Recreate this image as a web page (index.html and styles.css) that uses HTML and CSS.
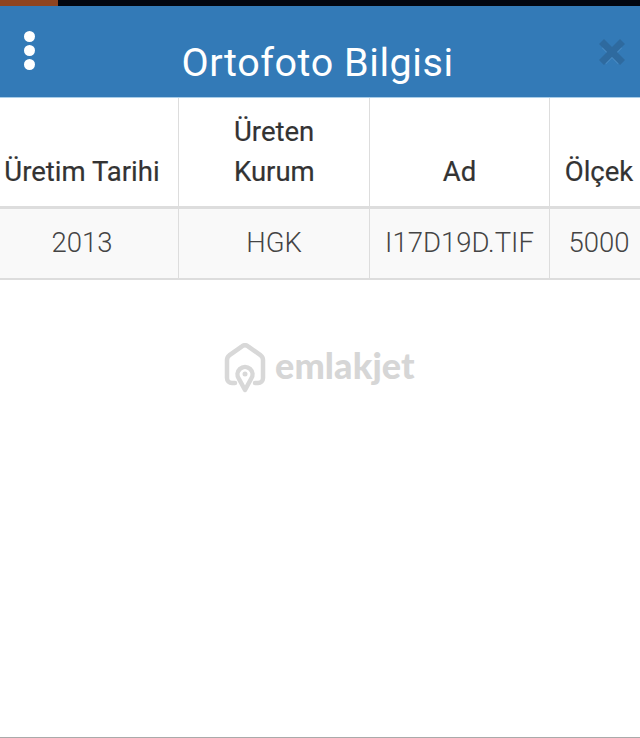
FILE: index.html
```html
<!DOCTYPE html>
<html lang="tr">
<head>
<meta charset="utf-8">
<title>Ortofoto Bilgisi</title>
<link rel="stylesheet" href="styles.css">
</head>
<body>
<div class="page">
  <div class="status"><div class="status-accent"></div></div>
  <header class="header">
    <div class="menu"><span class="dot"></span><span class="dot"></span><span class="dot"></span></div>
    <h1 class="title">Ortofoto Bilgisi</h1>
    <svg class="close" width="30" height="30" viewBox="0 0 30 30" aria-hidden="true">
      <path class="close-glow" d="M5 9 9 5l6 6 6-6 4 4-6 6 6 6-4 4-6-6-6 6-4-4 6-6z"/>
      <path class="close-x" d="M2 7 7 2l8 8 8-8 5 5-8 8 8 8-5 5-8-8-8 8-5-5 8-8z"/>
    </svg>
  </header>
  <div class="table">
    <div class="cell head c1">Üretim Tarihi</div>
    <div class="cell head c2">Üreten<br>Kurum</div>
    <div class="cell head c3">Ad</div>
    <div class="cell head c4">Ölçek</div>
    <div class="cell data c1">2013</div>
    <div class="cell data c2">HGK</div>
    <div class="cell data c3">I17D19D.TIF</div>
    <div class="cell data c4">5000</div>
  </div>
  <div class="watermark">
    <svg class="wm-icon" width="42" height="52" viewBox="0 0 42 52" aria-hidden="true">
      <path class="wm-stroke" d="M11 40H8a5 5 0 0 1-5-5V17c0-2 .8-3.500 2.200-4.600L18 3.300a5 5 0 0 1 6 0l12.800 9.100C38.200 13.500 39 15 39 17v18a5 5 0 0 1-5 5h-3"/>
      <path class="wm-stroke" d="M21 47l-6-11a7.500 7.500 0 1 1 12 0z"/>
      <circle class="wm-hole" cx="21" cy="31" r="2.500"/>
    </svg>
    <span class="wm-text">emlakjet</span>
  </div>
  <div class="spacer"></div>
  <div class="bottom-line"></div>
</div>
</body>
</html>
```

FILE: styles.css
```css
* { box-sizing: border-box; }
html, body { margin: 0; padding: 0; background: #fff; }
body { font-family: Roboto, "Liberation Sans", sans-serif; }
.page { width: 640px; height: 738px; overflow: hidden; display: flex; flex-direction: column; background: #fff; }
.status { height: 6px; background: #02060f; flex: none; }
.status-accent { width: 58px; height: 100%; background: #8f4420; }
.header { flex: none; height: 92px; background: #337ab7; border-bottom: 1px solid #a9cde8; display: flex; align-items: center; position: relative; }
.menu { position: absolute; left: 24px; top: 25px; display: flex; flex-direction: column; gap: 3px; }
.dot { width: 11px; height: 11px; border-radius: 50%; background: #fff; }
.title { margin: 22px 0 0; width: 635px; text-align: center; font-size: 39.500px; font-weight: 400; line-height: 44px; color: #fff; letter-spacing: .55px; }
.close { position: absolute; left: 597px; top: 31px; }
.close-x { fill: #2e6a9f; }
.close-glow { fill: #5b9bd0; transform: translateY(2px); opacity: .7; }
.table { flex: none; display: grid; grid-template-columns: 193px 191px 180px 98px; width: 662px; margin-left: -14px; color: #333; }
.cell { display: flex; align-items: flex-end; justify-content: center; text-align: center; border-right: 1px solid #ddd; }
.c4 { border-right: 0; }
.head { height: 111px; padding-bottom: 14px; line-height: 40px; font-weight: 400; font-size: 27.500px; border-bottom: 3px solid #ddd; color: #333; -webkit-text-stroke: .2px #333; }
.head.c2 { justify-content: flex-start; padding-left: 55px; text-align: left; }
.data { height: 71px; align-items: center; background: #f9f9f9; border-bottom: 2px solid #ddd; color: #444; font-weight: 300; font-size: 27.500px; padding-bottom: 2px; }
.watermark { flex: none; display: flex; align-items: center; gap: 9px; margin: 63px 0 0 224px; }
.wm-stroke { fill: none; stroke: #d8d8d8; stroke-width: 4.500; stroke-linejoin: round; stroke-linecap: round; }
.wm-hole { fill: #d8d8d8; }
.wm-text { font-family: Lato, "Open Sans", sans-serif; font-size: 36px; font-weight: 900; color: #d6d6d6; line-height: 44px; letter-spacing: .1px; margin-bottom: 8px; }
.spacer { flex: 1; }
.bottom-line { height: 1px; background: #aaa; flex: none; }
```
